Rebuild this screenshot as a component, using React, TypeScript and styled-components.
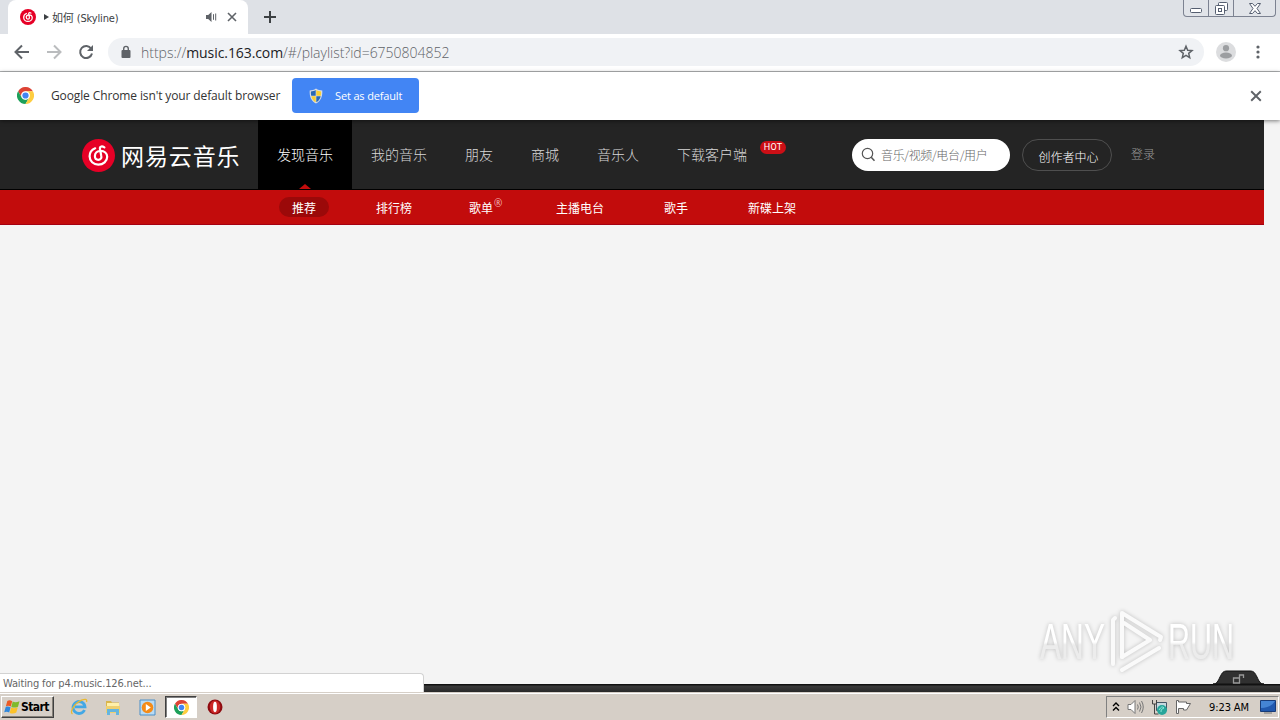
import type { ReactNode } from 'react';
import styled, { createGlobalStyle, css } from 'styled-components';

const GlobalStyle = createGlobalStyle`
    * { box-sizing: border-box; }
    body {
        margin: 0;
        overflow: hidden;
        font-family: 'Open Sans', 'Noto Sans CJK SC', sans-serif;
    }
    svg { display: block; flex: none; }
`;

const ui = "'DejaVu Sans Condensed', 'DejaVu Sans', 'Noto Sans CJK SC', sans-serif";

const Screen = styled.div`
    width: 1280px;
    height: 720px;
    display: flex;
    flex-direction: column;
    background: #f4f4f4;
`;

// --- Browser chrome ---

const TabStrip = styled.div`
    height: 34px;
    flex: none;
    display: flex;
    align-items: flex-start;
    padding-left: 8px;
    background: #dee1e6;
`;

const Tab = styled.div`
    width: 240px;
    height: 34px;
    display: flex;
    align-items: center;
    padding: 0 11px 0 12px;
    background: #fff;
    border-radius: 8px 8px 0 0;
`;

const TabTitle = styled.span`
    flex: 1;
    margin-left: 8px;
    display: flex;
    align-items: center;
    gap: 3px;
    font: 11px ${ui};
    font-stretch: condensed;
    letter-spacing: -0.15px;
    color: #3c4043;
    white-space: nowrap;
`;

const TabIcons = styled.div`
    display: flex;
    align-items: center;
    gap: 10px;
`;

const NewTab = styled.div`
    margin: 10px 0 0 15px;
`;

const WindowButtons = styled.div`
    margin-left: auto;
    margin-right: 4px;
    height: 17px;
    display: flex;
    border: 1px solid #7c8291;
    border-top: none;
    border-radius: 0 0 4px 4px;
    background: #e1e4e9;
`;

const WindowButton = styled.div<{ $width: number }>`
    width: ${({ $width }) => $width}px;
    display: flex;
    justify-content: center;
    align-items: center;

    & + & { border-left: 1px solid #7c8291; }
`;

const Toolbar = styled.div`
    height: 38px;
    flex: none;
    display: flex;
    align-items: center;
    padding: 0 14px 1px 14px;
    background: #fff;
    border-bottom: 1px solid #b2b4b6;
`;

const NavButtons = styled.div`
    display: flex;
    gap: 16px;
    width: 94px;
`;

const AddressBar = styled.div`
    width: 1096px;
    height: 28px;
    display: flex;
    align-items: center;
    padding: 0 10px 0 12px;
    border-radius: 14px;
    background: #f0f2f5;
`;

const Url = styled.span`
    flex: 1;
    margin-left: 9px;
    font-size: 14px;
    font-weight: 300;
    letter-spacing: -0.02px;
    color: #5f6368;
    white-space: nowrap;

    b { font-weight: 400; color: #202124; letter-spacing: -0.08px; }
`;

const ToolbarEnd = styled.div`
    display: flex;
    align-items: center;
    gap: 17px;
    margin-left: 12px;
`;

const InfoBar = styled.div`
    position: relative;
    z-index: 1;
    height: 48px;
    flex: none;
    display: flex;
    align-items: center;
    padding: 0 18px 1px 17px;
    background: #fff;
    box-shadow: 0 1px 4px rgba(0, 0, 0, 0.5);
`;

const InfoText = styled.span`
    width: 258px;
    padding-left: 17px;
    font-size: 12px;
    letter-spacing: -0.12px;
    color: #333;
    white-space: nowrap;
`;

const DefaultButton = styled.button`
    width: 127px;
    height: 35px;
    display: flex;
    align-items: center;
    gap: 12px;
    padding: 0 0 0 17px;
    border: none;
    border-radius: 4px;
    background: #4285f4;
    color: #fff;
    font: 11px 'Open Sans', sans-serif;
    letter-spacing: -0.15px;
    white-space: nowrap;
`;

const CloseSlot = styled.div`
    margin-left: auto;
`;

// --- Site header ---

const Page = styled.main`
    flex: 1;
    display: flex;
    flex-direction: column;
    font-family: 'Noto Sans CJK SC', sans-serif;
`;

const SiteHeader = styled.header`
    width: 1264px;
    height: 70px;
    display: flex;
    padding-left: 82px;
    background: #242424;
    border-bottom: 1px solid #000;
`;

const Logo = styled.div`
    width: 176px;
    display: flex;
    align-items: center;
    gap: 6px;
    padding-top: 1px;
    color: #fff;
    font-size: 23px;
    letter-spacing: 0.9px;
    line-height: 69px;
    white-space: nowrap;
`;

const NavItem = styled.a<{ $active?: boolean }>`
    position: relative;
    height: 69px;
    padding: 0 19px;
    color: ${({ $active }) => ($active ? '#fff' : '#d8d8d8')};
    font-size: 14px;
    font-weight: 300;
    line-height: 69px;
    white-space: nowrap;
    ${({ $active }) => $active && css`
        background: #000;
        &::after {
            content: '';
            position: absolute;
            left: 50%;
            bottom: 0;
            margin-left: -6px;
            border: 6px solid transparent;
            border-top: none;
            border-bottom-color: #c20c0c;
            border-bottom-width: 5px;
        }
    `}
`;

const HotBadge = styled.span`
    position: absolute;
    top: 21px;
    right: -20px;
    width: 26px;
    height: 13px;
    border-radius: 7px;
    background: #cc0f16;
    color: #fff;
    font: 400 9px/13px Roboto, sans-serif;
    letter-spacing: 0.2px;
    text-align: center;
`;

const Account = styled.div`
    display: flex;
    margin: 19px 0 0 86px;
    font-size: 12px;
    font-weight: 300;
`;

const SearchBox = styled.div`
    width: 158px;
    height: 32px;
    display: flex;
    align-items: center;
    gap: 5px;
    padding: 0 0 1px 9px;
    border-radius: 16px;
    background: #fff;
    color: #666;
    letter-spacing: -0.35px;
    white-space: nowrap;
`;

const CreatorButton = styled.a`
    width: 90px;
    height: 32px;
    margin-left: 12px;
    padding-left: 3px;
    border: 1px solid #4f4f4f;
    border-radius: 16px;
    color: #fff;
    line-height: 34px;
    text-align: center;
`;

const Login = styled.a`
    margin-left: 19px;
    color: #999;
    line-height: 30px;
`;

const SubNav = styled.nav`
    width: 1264px;
    height: 35px;
    display: flex;
    align-items: flex-start;
    gap: 34px;
    padding: 7px 0 0 279px;
    background: #c20c0c;
    border-bottom: 1px solid #a40011;
`;

const SubItem = styled.a<{ $active?: boolean }>`
    height: 20px;
    padding: 0 13px;
    border-radius: 10px;
    background: ${({ $active }) => ($active ? '#9b0909' : 'transparent')};
    color: #fff;
    font-size: 12px;
    line-height: 22px;
    white-space: nowrap;
`;

const Registered = styled.span`
    display: flex;
    width: 27px;
    margin-left: -3px;

    sup {
        margin: 0 0 0 1px;
        font: 10px/12px 'Open Sans', sans-serif;
        color: #f5bcbc;
    }
`;

const Content = styled.section`
    flex: 1;
    display: flex;
    flex-direction: column;
    justify-content: flex-end;
    align-items: flex-end;
`;

const LockTab = styled.div`
    margin-right: 16px;
`;

const Footer = styled.footer`
    height: 8px;
    flex: none;
    display: flex;
    align-items: flex-end;
    background: linear-gradient(#111 0 1px, #3a3a3a 2px, #292929);
`;

const StatusBubble = styled.div`
    width: 424px;
    height: 19px;
    flex: none;
    padding-left: 3px;
    border: 1px solid #d2d2d2;
    border-left: none;
    border-bottom: none;
    border-top-right-radius: 4px;
    background: #fff;
    color: #666;
    font: 11px/19px ${ui};
    font-stretch: condensed;
    letter-spacing: -0.14px;
    white-space: nowrap;
`;

const Watermark = styled.svg`
    margin: 0 40px -6px 0;
    overflow: visible;
    filter: drop-shadow(0 0 2px rgba(0, 0, 0, 0.22));
`;

// --- Taskbar ---

const Taskbar = styled.div`
    height: 28px;
    flex: none;
    display: flex;
    align-items: center;
    padding: 1px 1px 0 1px;
    background: #d6cfc7;
    border-top: 1px solid #d6cfc7;
    box-shadow: inset 0 1px #fff;
    font: 11px ${ui};
    font-stretch: condensed;
    color: #000;
`;

const StartButton = styled.div`
    width: 53px;
    height: 22px;
    display: flex;
    align-items: center;
    gap: 1px;
    padding-left: 2px;
    border: 1px solid;
    border-color: #fff #404040 #404040 #fff;
    box-shadow: inset -1px -1px #858078;
    font-weight: 700;
    font-size: 12px;
    letter-spacing: -0.6px;
`;

const TaskItem = styled.div<{ $pressed?: boolean }>`
    width: 32px;
    height: 22px;
    margin-left: 2px;
    display: flex;
    align-items: center;
    justify-content: center;
    ${({ $pressed }) => $pressed && css`
        border: 1px solid;
        border-color: #404040 #fff #fff #404040;
        box-shadow: inset 1px 1px #808080;
        background: #fff;
    `}
`;

const QuickLaunch = styled.div`
    display: flex;
    margin-left: 7px;
`;

const Tray = styled.div`
    width: 173px;
    height: 22px;
    margin-left: auto;
    display: flex;
    align-items: center;
    padding-left: 5px;
    border: 1px solid;
    border-color: #808080 #fff #fff #808080;
`;

const TrayIcons = styled.div`
    display: flex;
    align-items: center;
    gap: 7px;
    width: 97px;
`;

const Clock = styled.span`
    width: 51px;
    letter-spacing: -0.1px;
    white-space: nowrap;
`;

// --- Icons ---

const ChromeIcon = ({ size = 16 }: { size?: number }) => (
    <svg width={size} height={size} viewBox="0 0 24 24">
        <path d="M1.6 6A12 12 0 0 1 22.4 6H12a6 6 0 0 0-5.2 9z" fill="#dd4335" />
        <path d="M1.6 6l5.2 9a6 6 0 0 0 10.4 0L12 24A12 12 0 0 1 1.6 6z" fill="#1da05a" />
        <path d="M22.4 6A12 12 0 0 1 12 24l5.2-9A6 6 0 0 0 12 6z" fill="#fecd40" />
        <circle cx="12" cy="12" r="5.8" fill="#fff" />
        <circle cx="12" cy="12" r="4.4" fill="#4285f4" />
    </svg>
);

const NeteaseIcon = ({ size, weight = 2.2 }: { size: number; weight?: number }) => (
    <svg width={size} height={size} viewBox="0 0 33 33" fill="none" stroke="#fff" strokeWidth={weight} strokeLinecap="round">
        <circle cx="16.5" cy="16.5" r="16.5" fill="#e60026" stroke="none" />
        <path d="M13.200 9.300C9.500 10.900 7.600 13.800 7.600 17.300c0 4.900 3.900 8.300 8.700 8.300 5 0 8.900-3.400 8.900-7.800 0-3.700-2.900-5.900-6.500-5.900-3.500 0-5.800 2.200-5.800 5.100 0 2.300 1.500 3.800 3.400 3.800 2.200 0 3.500-1.700 3-3.900L18 10.200c-.6-2.500 1.500-3.700 4.400-1.800" />
    </svg>
);

const Cross = ({ size = 10, color = '#5f6368' }: { size?: number; color?: string }) => (
    <svg width={size} height={size} viewBox="0 0 10 10" stroke={color} strokeWidth="1.6">
        <path d="M1 1l8 8M9 1L1 9" />
    </svg>
);

const Arrow = ({ color, flip }: { color: string; flip?: boolean }) => (
    <svg width="16" height="16" viewBox="0 0 16 16" fill="none" stroke={color} strokeWidth="2">
        <path d={flip ? 'M1 8h13M8 1.500l6.500 6.500L8 14.500' : 'M15 8H2M8 1.500L1.500 8 8 14.500'} />
    </svg>
);

const ReloadIcon = () => (
    <svg width="16" height="16" viewBox="0 0 16 16">
        <path d="M13.200 4.700A6 6 0 1 0 14 9.500" fill="none" stroke="#5f6368" strokeWidth="2" />
        <path d="M15 1v6H9z" fill="#5f6368" />
    </svg>
);

const SpeakerIcon = () => (
    <svg width="12" height="12" viewBox="0 0 12 12">
        <path d="M1 4h2.200L6.500 1v10L3.200 8H1z" fill="#5f6368" />
        <path d="M8.500 3.200v5.600M10.700 2.500v7" stroke="#5f6368" strokeWidth="1" />
    </svg>
);

const LockIcon = () => (
    <svg width="12" height="14" viewBox="0 0 12 14">
        <rect x="1.500" y="5" width="9" height="8" rx="1" fill="#5f6368" />
        <path d="M3.700 5.500V3.700a2.300 2.300 0 0 1 4.600 0v1.800" fill="none" stroke="#5f6368" strokeWidth="1.400" />
    </svg>
);

const StarIcon = () => (
    <svg width="16" height="16" viewBox="0 0 16 16" fill="none" stroke="#5f6368" strokeWidth="1.500">
        <path d="M8 2.200l1.700 4 4.300.4-3.300 2.800 1 4.300L8 11.400l-3.700 2.300 1-4.300L2 6.600l4.300-.4z" />
    </svg>
);

const AvatarIcon = () => (
    <svg width="20" height="20" viewBox="0 0 20 20">
        <circle cx="10" cy="10" r="10" fill="#dcdddf" />
        <circle cx="10" cy="6.200" r="3.100" fill="#9c9ea1" />
        <ellipse cx="10" cy="13.500" rx="6" ry="3" fill="#9c9ea1" />
    </svg>
);

const MenuIcon = () => (
    <svg width="10" height="16" viewBox="0 0 10 16" fill="#5f6368">
        <circle cx="5" cy="3" r="1.600" />
        <circle cx="5" cy="8" r="1.600" />
        <circle cx="5" cy="13" r="1.600" />
    </svg>
);

const ShieldIcon = () => (
    <svg width="14" height="16" viewBox="0 0 14 16">
        <path d="M7 .5C5 2 3 2.400.7 2.500.4 8.500 2 13 7 15.500 12 13 13.600 8.500 13.300 2.500 11 2.400 9 2 7 .5z" fill="#d7dde6" />
        <path d="M6.700 2C5 3 3.500 3.400 1.900 3.500c-.1 1.600 0 3 .3 4.300h4.500z" fill="#2868b5" />
        <path d="M7.300 2C9 3 10.500 3.400 12.100 3.500c.1 1.600 0 3-.3 4.300H7.300zM6.700 8.300H2.300C3 11 4.300 13 6.700 14.300z" fill="#f8cf33" />
        <path d="M7.300 8.300h4.400c-.7 2.700-2 4.700-4.400 6z" fill="#2868b5" />
    </svg>
);

const SearchIcon = () => (
    <svg width="15" height="15" viewBox="0 0 15 15" fill="none" stroke="#555" strokeWidth="1.200">
        <circle cx="6.500" cy="6.500" r="5.200" />
        <path d="M10.200 10.200l3.300 3.500" strokeWidth="1.600" />
    </svg>
);

const WindowsFlag = () => (
    <svg width="16" height="16" viewBox="0 0 16 16">
        <path d="M3.300 2C5 1 6.500 1.200 8.200 2.200L6.800 7.600C5 6.600 3.600 6.500 1.900 7.300z" fill="#ec5b24" />
        <path d="M8.700 2.600c1.600.8 3.900 1 6.800-.4l-1.500 5.500C12 8.700 9.500 8.900 7.300 7.900z" fill="#7fba2c" />
        <path d="M1.700 7.900C3.400 7.200 4.800 7.400 6.600 8.300L5.200 13.500C3.500 12.600 2 12.500.2 13.300z" fill="#3188dc" />
        <path d="M7.100 8.600c2 .9 4.500.8 6.700-.3l-1.500 5.300c-2.300 1.300-4.500 1.100-6.600.3z" fill="#fcc229" />
    </svg>
);

const ExplorerIcon = () => (
    <svg width="18" height="18" viewBox="0 0 18 18" fill="none">
        <path d="M14.500 12A6 6 0 1 1 15 8.800H5" stroke="#43a8e5" strokeWidth="2.800" />
        <path d="M2.500 16C-1 14 5 5 11.500 2.200 15 .7 17.500 1 16.500 4" stroke="#e9b931" strokeWidth="1.300" />
    </svg>
);

const FolderIcon = () => (
    <svg width="18" height="18" viewBox="0 0 18 18">
        <path d="M2 3h5l1 1.500h7V14H2z" fill="#d9b54c" />
        <path d="M3 5h12v5H3z" fill="#fff0aa" />
        <path d="M2 8h14v7H2z" fill="#efd070" />
        <path d="M3 17v-6h12v6h-3v-3H6v3z" fill="#65b5df" />
    </svg>
);

const MediaIcon = () => (
    <svg width="17" height="17" viewBox="0 0 17 17">
        <path d="M1 1h15v15H1z" fill="#b9dbf4" stroke="#4a8fc8" />
        <circle cx="8.500" cy="8.500" r="5.800" fill="#f48b18" />
        <path d="M6.800 5l5 3.500-5 3.500z" fill="#fff" />
    </svg>
);

const OperaIcon = () => (
    <svg width="16" height="16" viewBox="0 0 16 16">
        <circle cx="8" cy="8" r="7.500" fill="#8e0b10" />
        <ellipse cx="8" cy="8" rx="5.300" ry="6.400" fill="#cc2826" />
        <ellipse cx="8" cy="8" rx="1.900" ry="5.200" fill="#fff" />
    </svg>
);

const TraySpeaker = () => (
    <svg width="17" height="16" viewBox="0 0 17 16" fill="#fff" stroke="#777">
        <path d="M1 5.500h3L8 1.500v13l-4-4H1z" />
        <path d="M10.500 5.500q1.500 2.500 0 5M12.500 3.500q3 4.500 0 9M14.500 2q3.500 6 0 12" fill="none" />
    </svg>
);

const NetworkIcon = () => (
    <svg width="17" height="17" viewBox="0 0 17 17">
        <path d="M5.500 3.500h10v8h-10z" fill="#c6d9df" stroke="#456" />
        <path d="M1.500 1v4h4V1M3.500 5v10h4" fill="none" stroke="#444" />
        <circle cx="11" cy="11" r="5" fill="#26a59a" />
        <path d="M8 11q3-5 5-2-4 1-3 4" fill="none" stroke="#8ee6d9" />
    </svg>
);

const FlagIcon = () => (
    <svg width="17" height="16" viewBox="0 0 17 16" fill="#fff" stroke="#666">
        <path d="M1.500 1.500v13h2V9.500h5v1.500h3l4-6.500h-4V3h-8V1.500z" />
    </svg>
);

const DesktopIcon = () => (
    <svg width="16" height="14" viewBox="0 0 16 14">
        <path d="M.5.5h15v11H.5z" fill="#2159ae" stroke="#183c78" />
        <path d="M1 1h14Q11 8 1 8z" fill="#4585d4" />
        <path d="M4 13h8" stroke="#777" />
    </svg>
);

type Entry = { label: string; active?: boolean; badge?: ReactNode };

const mainNav: Entry[] = [
    { label: '发现音乐', active: true },
    { label: '我的音乐' },
    { label: '朋友' },
    { label: '商城' },
    { label: '音乐人' },
    { label: '下载客户端', badge: <HotBadge>HOT</HotBadge> },
];

const subNav = ['推荐', '排行榜', '歌单', '主播电台', '歌手', '新碟上架'];

export default function App() {
    return (
        <Screen>
            <GlobalStyle />
            <TabStrip>
                <Tab>
                    <NeteaseIcon size={16} weight={2.6} />
                    <TabTitle>
                        <svg width="5" height="6" viewBox="0 0 5 6"><path d="M0 0l5 3-5 3z" fill="#3c4043" /></svg>
                        如何 (Skyline)
                    </TabTitle>
                    <TabIcons>
                        <SpeakerIcon />
                        <Cross />
                    </TabIcons>
                </Tab>
                <NewTab>
                    <svg width="14" height="14" viewBox="0 0 14 14" stroke="#3c4043" strokeWidth="2"><path d="M7 1v12M1 7h12" /></svg>
                </NewTab>
                <WindowButtons>
                    <WindowButton $width={24}>
                        <svg width="12" height="16" viewBox="0 0 12 16"><rect x=".5" y="8.500" width="11" height="4" rx="1" fill="#fff" stroke="#555e70" /></svg>
                    </WindowButton>
                    <WindowButton $width={25}>
                        <svg width="13" height="14" viewBox="0 0 13 14" fill="#fff" stroke="#555e70">
                            <rect x="3.500" y="1.500" width="9" height="8" rx="1" />
                            <rect x=".5" y="4.500" width="9" height="9" rx="1" />
                            <rect x="3.500" y="7.500" width="3" height="3" />
                        </svg>
                    </WindowButton>
                    <WindowButton $width={42}>
                        <svg width="12" height="11" viewBox="0 0 12 11" fill="#fff" stroke="#555e70">
                            <path d="M.5.5h3L6 3.300 8.500.5h3L8 5.500l3.500 5h-3L6 7.700l-2.500 2.800h-3L4 5.500z" />
                        </svg>
                    </WindowButton>
                </WindowButtons>
            </TabStrip>

            <Toolbar>
                <NavButtons>
                    <Arrow color="#5f6368" />
                    <Arrow color="#babcbe" flip />
                    <ReloadIcon />
                </NavButtons>
                <AddressBar>
                    <LockIcon />
                    <Url>https://<b>music.163.com</b>/#/playlist?id=6750804852</Url>
                    <StarIcon />
                </AddressBar>
                <ToolbarEnd>
                    <AvatarIcon />
                    <MenuIcon />
                </ToolbarEnd>
            </Toolbar>

            <InfoBar>
                <ChromeIcon size={17} />
                <InfoText>Google Chrome isn't your default browser</InfoText>
                <DefaultButton>
                    <ShieldIcon />
                    Set as default
                </DefaultButton>
                <CloseSlot><Cross size={12} /></CloseSlot>
            </InfoBar>

            <Page>
                <SiteHeader>
                    <Logo>
                        <NeteaseIcon size={33} />
                        网易云音乐
                    </Logo>
                    {mainNav.map(({ label, active, badge }) => (
                        <NavItem key={label} $active={active}>{label}{badge}</NavItem>
                    ))}
                    <Account>
                        <SearchBox>
                            <SearchIcon />
                            音乐/视频/电台/用户
                        </SearchBox>
                        <CreatorButton>创作者中心</CreatorButton>
                        <Login>登录</Login>
                    </Account>
                </SiteHeader>
                <SubNav>
                    {subNav.map((label, i) => (
                        <SubItem key={label} $active={i === 0}>
                            {label === '歌单' ? <Registered>{label}<sup>®</sup></Registered> : label}
                        </SubItem>
                    ))}
                </SubNav>
                <Content>
                    <Watermark width="202" height="70" viewBox="0 0 202 70">
                        <defs>
                            <linearGradient id="fade" x1="0" y1="0" x2="0" y2="1">
                                <stop offset="0.5" stopColor="#fff" />
                                <stop offset="0.55" stopColor="#ececec" />
                            </linearGradient>
                        </defs>
                        <g fill="url(#fade)" fontFamily="Liberation Sans" fontSize="50">
                            <text x="2" y="53" textLength="65" lengthAdjust="spacingAndGlyphs">ANY</text>
                            <text x="130" y="53" textLength="66" lengthAdjust="spacingAndGlyphs">RUN</text>
                        </g>
                        <g fill="none" stroke="#fafafa" strokeWidth="4" strokeLinejoin="round" strokeLinecap="round">
                            <path d="M75 58V14l2-2M84 51V7l39 24-1 3" />
                            <path d="M84 51l28-17-26-17M84 64l37-22" />
                        </g>
                    </Watermark>
                    <LockTab>
                        <svg width="51" height="14" viewBox="0 0 51 14">
                            <path d="M0 14c4 0 5-3 7-7 2-4 3-6 7-6h23c4 0 5 2 7 6 2 4 3 7 7 7z" fill="#303030" stroke="#111" />
                            <path d="M20.500 8h6v5h-6zM26.500 9V5h4v3" fill="none" stroke="#999" strokeWidth="1.300" />
                        </svg>
                    </LockTab>
                </Content>
            </Page>

            <Footer>
                <StatusBubble>Waiting for p4.music.126.net...</StatusBubble>
            </Footer>

            <Taskbar>
                <StartButton><WindowsFlag />Start</StartButton>
                <QuickLaunch>
                    <TaskItem><ExplorerIcon /></TaskItem>
                    <TaskItem><FolderIcon /></TaskItem>
                    <TaskItem><MediaIcon /></TaskItem>
                    <TaskItem $pressed><ChromeIcon size={15} /></TaskItem>
                    <TaskItem><OperaIcon /></TaskItem>
                </QuickLaunch>
                <Tray>
                    <TrayIcons>
                        <svg width="8" height="12" viewBox="0 0 8 12" fill="none" stroke="#000" strokeWidth="1.400"><path d="M1 5l3-3 3 3M1 9.500l3-3 3 3" /></svg>
                        <TraySpeaker />
                        <NetworkIcon />
                        <FlagIcon />
                    </TrayIcons>
                    <Clock>9:23 AM</Clock>
                    <DesktopIcon />
                </Tray>
            </Taskbar>
        </Screen>
    );
}
